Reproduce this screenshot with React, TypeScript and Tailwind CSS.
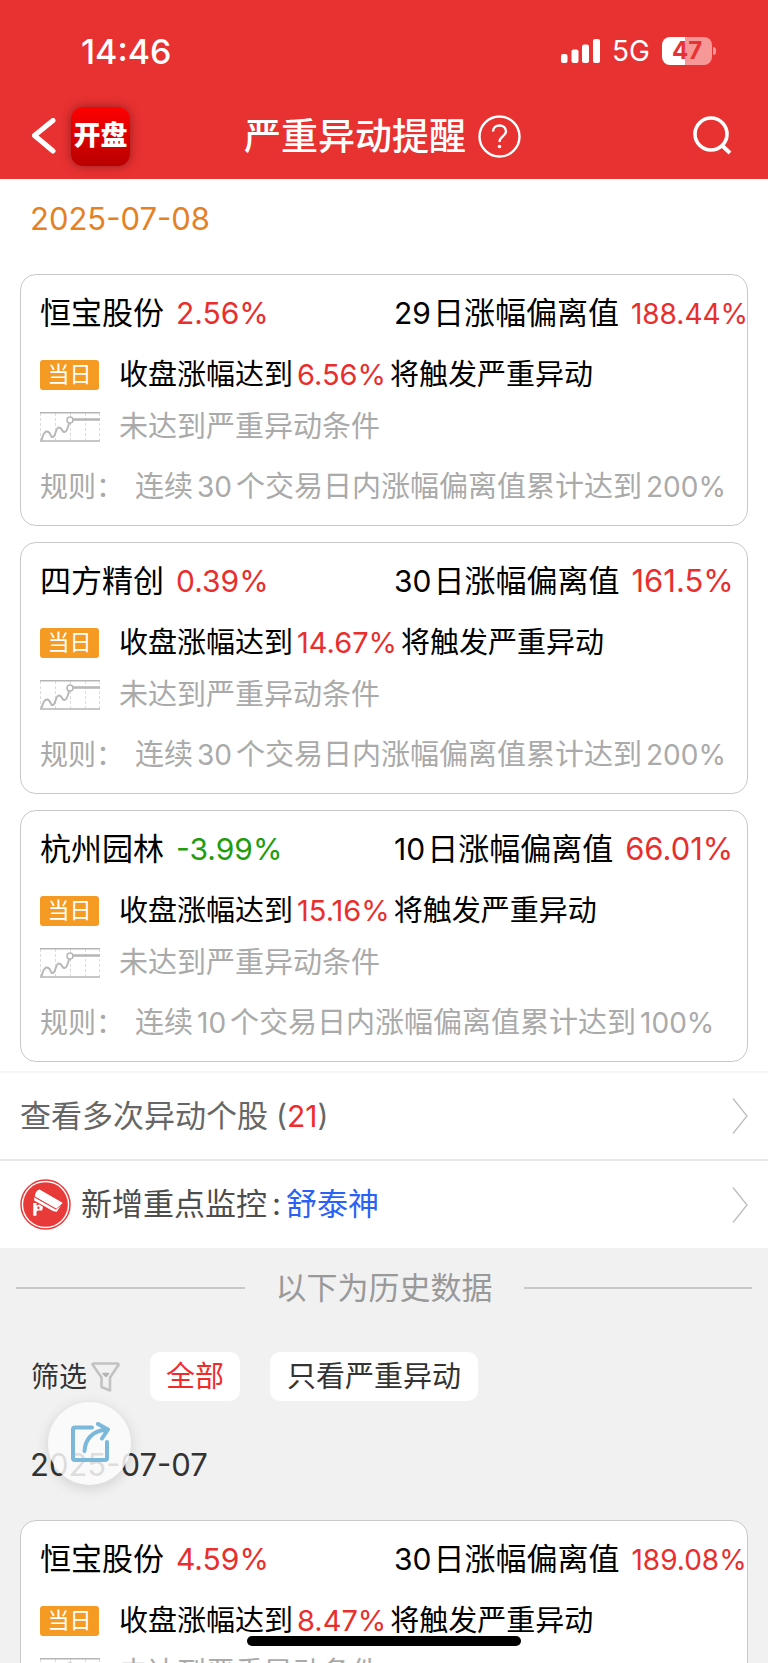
import React from "react";

type Stock = {
  name: string;
  change: string;
  falling?: boolean;
  days: number;
  deviation: string;
  trigger: string;
  ruleDays: number;
  ruleLimit: string;
};

const today: Stock[] = [
  { name: "恒宝股份", change: "2.56%", days: 29, deviation: "188.44%", trigger: "6.56%", ruleDays: 30, ruleLimit: "200%" },
  { name: "四方精创", change: "0.39%", days: 30, deviation: "161.5%", trigger: "14.67%", ruleDays: 30, ruleLimit: "200%" },
  { name: "杭州园林", change: "-3.99%", falling: true, days: 10, deviation: "66.01%", trigger: "15.16%", ruleDays: 10, ruleLimit: "100%" },
];

const history: Stock[] = [
  { name: "恒宝股份", change: "4.59%", days: 30, deviation: "189.08%", trigger: "8.47%", ruleDays: 30, ruleLimit: "200%" },
];

function TrendIcon() {
  return (
    <svg className="h-[30px] w-[60px] shrink-0" viewBox="0 0 60 30" fill="none" aria-hidden="true">
      <path d="M.5 1V29M15.5 1V29M30.5 1V29M45.5 1V29M59.5 1V29" stroke="#dcdcdc" strokeDasharray="3 2" />
      <path d="M0 .8H60M0 29H60" stroke="#b5b5b5" strokeWidth="1.4" />
      <path d="M1.500 28.500C3 22 5 19 7.500 19.500c4 1 2.500 6.500 5.500 5.500s2.500-9.500 6-9.500 2.500 5 5.500 4.500 3.500-5 4.500-9" stroke="#b8b8b8" strokeWidth="2" />
      <path d="M33 7.5H60" stroke="#b8b8b8" strokeWidth="2.6" />
      <circle cx="30" cy="8" r="3" fill="#fff" stroke="#b8b8b8" strokeWidth="1.6" />
    </svg>
  );
}

function StockCard({ stock }: { stock: Stock }) {
  const small = stock.deviation.length > 6;
  return (
    <article className="mx-5 rounded-2xl border border-[#c9c9c9] bg-white pl-[19px] pt-[15px] pb-[5px] whitespace-nowrap text-black">
      <div className="grid h-[47px] grid-cols-[354px_1fr] items-center text-[31px]">
        <h2 className="flex items-center gap-3">
          <span>{stock.name}</span>
          <span className={stock.falling ? "text-[30px] text-[#1f9d0c]" : "text-[30px] text-[#e92e2e]"}>{stock.change}</span>
        </h2>
        <p className="flex items-center gap-3">
          <span className="flex items-center">
            <span className="text-[30px]">{stock.days}</span>
            <span className="ml-0.5">日涨幅偏离值</span>
          </span>
          <span className={small ? "text-[28px] text-[#e92e2e]" : "text-[31px] text-[#e92e2e]"}>{stock.deviation}</span>
        </p>
      </div>
      <div className="mt-3 flex h-[51px] items-center gap-5 text-[29px]">
        <span className="flex h-[30px] w-[59px] shrink-0 items-center justify-center rounded-[3px] bg-[#f59a23] text-[22px] text-white">当日</span>
        <p className="flex items-center">
          收盘涨幅达到
          <span className="ml-1 text-[29px] text-[#e92e2e]">{stock.trigger}</span>
          <span className="ml-1">将触发严重异动</span>
        </p>
      </div>
      <div className="flex h-[54px] items-center gap-[19px] text-[29px] text-[#aaa]">
        <TrendIcon />
        <p>未达到严重异动条件</p>
      </div>
      <div className="flex h-[66px] items-center text-[29px] text-[#aaa]">
        <span className="w-[95px] shrink-0 text-[28px]">规则：</span>
        <p className="flex items-center">
          连续
          <span className="mx-1 text-[28px]">{stock.ruleDays}</span>
          个交易日内涨幅偏离值累计达到
          <span className="ml-1 text-[28px]">{stock.ruleLimit}</span>
        </p>
      </div>
    </article>
  );
}

function Chevron() {
  return (
    <svg className="ml-auto h-9 w-4 shrink-0" viewBox="0 0 16 36" fill="none" stroke="#bdbdbd" strokeWidth="1.3" aria-hidden="true">
      <path d="M1 .5L15 18L1 35.5" />
    </svg>
  );
}

function CameraBadge() {
  return (
    <svg className="h-[51px] w-[51px] shrink-0" viewBox="0 0 52 52" aria-hidden="true">
      <circle cx="26" cy="26" r="25" fill="#fff" stroke="#e93a3a" strokeWidth="1.5" />
      <circle cx="26" cy="26" r="22.8" fill="#e93a3a" />
      <path d="M20 11.500L42.500 24.500L37 29.500L16 17.500Q16.500 12.500 20 11.500Z" fill="#fff" stroke="#fff" strokeWidth="1.5" strokeLinejoin="round" />
      <path d="M14.500 18.500L36.500 31L42 26.500L37.500 33.500L34 33L14.500 22Z" fill="#fff" />
      <path d="M15 18.400L37 30.800L43 25.500" fill="none" stroke="#e93a3a" strokeWidth=".6" />
      <path d="M13.500 24.500H16.800V27L20 26L23.500 28.500L22.500 32L18 32L16.800 33.500V37.500H13.500Z" fill="#fff" />
      <circle cx="18.800" cy="29.300" r="1.200" fill="#e93a3a" />
    </svg>
  );
}

function FunnelIcon() {
  return (
    <svg className="mr-[30px] ml-1 h-[30px] w-[29px]" viewBox="0 0 29 30" fill="none" stroke="#c2c2c2" strokeLinejoin="round" strokeLinecap="round" aria-hidden="true">
      <path d="M1.500 2.500Q1.500 1.500 3 1.500H26Q27.500 1.500 27.500 3L19 15.500V28.500L10.500 25V15.500Z" strokeWidth="2.6" />
      <path d="M12 11.500H17.500L15 14.500Z" fill="#b5b5b5" stroke="#b5b5b5" strokeWidth="1.6" />
    </svg>
  );
}

function StatusBar() {
  return (
    <div className="flex h-[102px] items-center justify-between pr-[52px] pl-[81px]">
      <span className="text-[34px] font-medium">14:46</span>
      <div className="flex items-center gap-3">
        <svg className="h-6 w-[39px]" viewBox="0 0 39 24" fill="#fff" aria-hidden="true">
          <rect x="0" y="15" width="6.5" height="9" rx="2" />
          <rect x="10.5" y="10.5" width="7" height="13.5" rx="2" />
          <rect x="21" y="5.5" width="7" height="18.5" rx="2" />
          <rect x="32" y="0" width="7" height="24" rx="2" />
        </svg>
        <span className="text-[28px]">5G</span>
        <div className="flex items-center gap-px">
          <span className="flex h-7 w-[50px] items-center justify-center rounded-lg bg-linear-to-r from-white from-47% to-[#f79898] to-47% text-[24px] font-bold text-[#e83131]">
            47
          </span>
          <span className="h-2 w-[3px] rounded-r-full bg-[#f79898]" />
        </div>
      </div>
    </div>
  );
}

export default function App() {
  return (
    <div className="relative flex h-screen flex-col overflow-hidden bg-[#f1f1f1] font-['Inter','Noto_Sans_CJK_SC',sans-serif]">
      <header className="shrink-0 bg-[#e83131] text-white">
        <StatusBar />
        <div className="grid h-[77px] grid-cols-[1fr_auto_1fr] items-center pr-[35px] pb-[9px] pl-8">
          <div className="flex items-center gap-[15px]">
            <button type="button" aria-label="返回">
              <svg className="h-9 w-6" viewBox="0 0 24 36" fill="none" stroke="#fff" strokeWidth="5" strokeLinecap="round" strokeLinejoin="round">
                <path d="M21 2.5L2.5 17.5L21 33" />
              </svg>
            </button>
            <span className="flex h-[59px] w-[59px] items-center justify-center rounded-xl bg-linear-to-b from-[#ff0000] to-[#b80000] text-[27px] font-black shadow-[0_0_10px_rgba(90,20,20,0.6)]">
              开盘
            </span>
          </div>
          <div className="flex items-center gap-3">
            <h1 className="text-[37px] leading-none font-medium">严重异动提醒</h1>
            <button type="button" aria-label="帮助">
              <svg className="h-[43px] w-[43px]" viewBox="0 0 43 43" fill="none" stroke="#fff" strokeWidth="2.4">
                <circle cx="21.5" cy="21.5" r="20" />
                <path d="M15 16.5C15 8.500 28 8.500 28 16.500C28 21 21.500 21.500 21.500 27" />
                <circle cx="21.5" cy="31.5" r="1.8" fill="#fff" stroke="none" />
              </svg>
            </button>
          </div>
          <button type="button" aria-label="搜索" className="justify-self-end">
            <svg className="h-10 w-10" viewBox="0 0 40 40" fill="none" stroke="#fff" strokeWidth="3.6">
              <circle cx="18" cy="18" r="16" />
              <path d="M28.500 29L37 37" strokeWidth="4" />
            </svg>
          </button>
        </div>
      </header>

      <main className="min-h-0 flex-1 overflow-y-auto [scrollbar-width:none]">
        <section className="bg-white">
          <h2 className="flex h-20 items-center pl-[30px] text-[31px] text-[#e58125]">2025-07-08</h2>
          <div className="flex flex-col gap-4 pt-[15px] pb-[9px]">
            {today.map((s) => (
              <StockCard key={s.name} stock={s} />
            ))}
          </div>
          <a href="#multiple" className="flex h-[88px] items-center border-t-2 border-[#f5f5fb] px-5 text-[31px] text-[#666]">
            查看多次异动个股
            <span className="ml-2 text-[30px]">
              (<span className="text-[#f02b2b]">21</span>)
            </span>
            <Chevron />
          </a>
          <a href="#monitor" className="flex h-[89px] items-center border-t-2 border-[#e8e8e8] px-5 text-[31px] text-[#4d4d4d]">
            <CameraBadge />
            <span className="ml-[10px]">新增重点监控</span>
            <span className="mx-[5px]">:</span>
            <span className="text-[#2b62f5]">舒泰神</span>
            <Chevron />
          </a>
        </section>

        <section className="relative">
          <div className="flex h-20 items-center gap-[31px] px-4">
            <span className="h-0.5 flex-1 bg-[#c8c8c8]" />
            <h2 className="text-[31px] text-[#999]">以下为历史数据</h2>
            <span className="h-0.5 flex-1 bg-[#c8c8c8]" />
          </div>
          <div className="flex items-center pt-6 pl-[31px] text-[29px] text-[#333]">
            <span className="text-[28px]">筛选</span>
            <FunnelIcon />
            <button type="button" className="mr-[30px] flex h-[49px] items-center rounded-[10px] bg-white px-4 text-[#f02b2b]">全部</button>
            <button type="button" className="flex h-[49px] items-center rounded-[10px] bg-white px-[17px]">只看严重异动</button>
          </div>
          <h2 className="flex h-[119px] items-center pt-2.5 pl-[30px] text-[31px] text-[#333]">2025-07-07</h2>
          {history.map((s) => (
            <StockCard key={s.name} stock={s} />
          ))}
          <button
            type="button"
            aria-label="分享"
            className="absolute top-[154px] left-12 flex h-[83px] w-[83px] items-center justify-center rounded-full bg-[#fbfbfb]/85 pb-1 shadow-[0_3px_14px_rgba(0,0,0,0.14)]"
          >
            <svg className="h-10 w-10" viewBox="0 0 40 40" fill="none" stroke="#7bb8da" strokeWidth="4" strokeLinecap="round" strokeLinejoin="round">
              <path d="M22 5.500H5Q3 5.500 3 7.500V36Q3 38 5 38H35Q37 38 37 36V20" />
              <path d="M14.500 29C15 18 22 8.500 37 7.500M28 2L38 7.500L32 16.500" />
            </svg>
          </button>
        </section>
      </main>
      <div className="absolute bottom-[17px] left-1/2 h-2.5 w-[274px] -translate-x-1/2 rounded-full bg-black" />
    </div>
  );
}
